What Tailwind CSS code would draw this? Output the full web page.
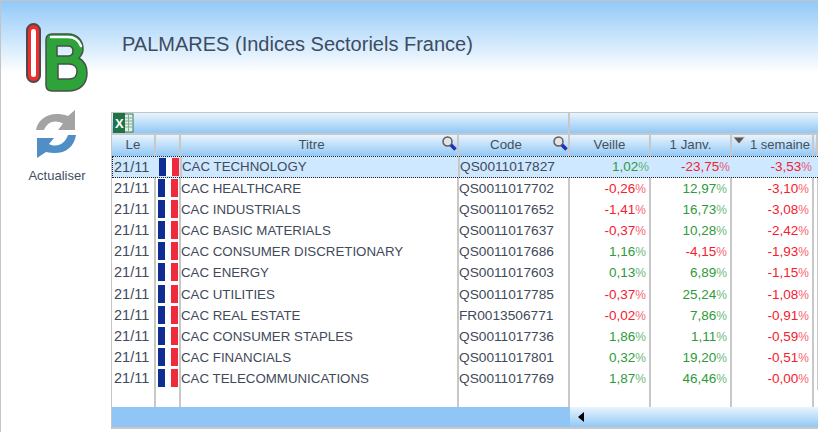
<!DOCTYPE html>
<html lang="en">

<head>
    <meta charset="utf-8">
    <title>Palmares</title>
    <script src="https://cdn.jsdelivr.net/npm/@tailwindcss/browser@4"></script>
</head>

<body class="w-[818px] h-[432px] overflow-hidden bg-white font-['Liberation_Sans',sans-serif] text-[13.300px] text-[#3f4a5a]">
    <div class="flex w-[818px] h-[432px] border-l border-t border-[#c4c4c4] bg-[linear-gradient(#92c9f8,#ffffff_72px)]">
        <!-- Left column: logo + refresh -->
        <div class="w-[110px] shrink-0 flex flex-col">
            <svg class="ml-[24px] mt-[21px]" width="66" height="72" viewBox="25 22 66 72">
                <rect x="27" y="24" width="13" height="58" rx="6.500" fill="#ee2e2e" stroke="#4a4a4a" stroke-width="2"/>
                <rect x="31" y="29" width="5" height="48" rx="2.500" fill="#ffffff"/>
                <path fill-rule="evenodd" fill="#2ea33a" stroke="#46524a" stroke-width="1.500" d="M52 34H68C78 34 83 41 83 49C83 53 81 56 79 58C84 61 87 66 87 73C87 84 80 91 68 91H52C48 91 46 89 46 85V40C46 36 48 34 52 34ZM57 46V56H68C71 56 73 54 73 51C73 48 71 46 68 46ZM58 64V79H69C74 79 77 76 77 71.500C77 67 74 64 69 64Z"/>
                <path d="M51 37H68C75 37 79 41 81 46" fill="none" stroke="#ffffff" stroke-width="2.500" stroke-linecap="round"/>
            </svg>
            <svg class="ml-[33px] mt-[15px]" width="44" height="50" viewBox="34 109 44 50">
                <path fill="#a3a3a3" d="M36 130C38 119 50 110 68 116L75 110V130H58L63 123.500C55 119 47 122 44 130Z"/>
                <path fill="#4f8fc6" d="M76 135C74 149 62 156 46 152L37 158V138H54L49 144C57 148 65 144 68 135Z"/>
            </svg>
            <div class="mt-[9px] pl-[2px] text-center text-[13px] leading-[16px] text-[#44505e]">Actualiser</div>
        </div>

        <!-- Right column: title + table -->
        <div class="flex-1 flex flex-col min-w-0">
            <div class="h-[111px] pl-[11px] pt-[30px] text-[20px] leading-[26px] text-[#3d4c63]">PALMARES (Indices Sectoriels France)</div>

            <div class="flex-1 flex flex-col mb-[3px] border-l border-t border-[#c4c4c4]">
                <!-- Toolbar -->
                <div class="h-[22px] flex shrink-0 border-b-2 border-[#c8c8c8]">
                    <div class="w-[458px] bg-[linear-gradient(#e8f4fe,#92c8f6)] border-r-2 border-[#c8c8c8]">
                        <svg width="22" height="20" viewBox="0 0 22 20">
                            <rect x="10" y="1" width="11" height="18" fill="#e4efe8" stroke="#2f7d55"/>
                            <path d="M13 5H20M13 8H20M13 11H20M13 14H20M16.500 2V18" stroke="#7fae95"/>
                            <rect x="1" y="0" width="12" height="20" fill="#1f7346"/>
                            <text x="3" y="15" font-size="13" font-weight="700" fill="#ffffff">X</text>
                        </svg>
                    </div>
                    <div class="flex-1 bg-[linear-gradient(#e8f4fe,#92c8f6)]"></div>
                </div>

                <!-- Column headers -->
                <div class="h-[21px] shrink-0 grid grid-cols-[44px_25px_278px_111px_81px_81px_82px_1fr] text-center leading-[19px] text-[#44505e] [&>div]:bg-[linear-gradient(#e8f4fe,#92c8f6)] [&>div]:border-r-2 [&>div]:border-[#c8c8c8]">
                    <div>Le</div>
                    <div></div>
                    <div class="relative pr-[15px]">Titre
                        <svg class="absolute right-0 top-[1px]" width="15" height="15" viewBox="0 0 15 15"><path d="M8 8L13.500 13.500" stroke="#1f2fc0" stroke-width="3.500"/><circle cx="5.500" cy="5.500" r="4.500" fill="#e4e4e4" stroke="#5e5e5e" stroke-width="1.500"/></svg>
                    </div>
                    <div class="relative pr-[15px]">Code
                        <svg class="absolute right-0 top-[1px]" width="15" height="15" viewBox="0 0 15 15"><path d="M8 8L13.500 13.500" stroke="#1f2fc0" stroke-width="3.500"/><circle cx="5.500" cy="5.500" r="4.500" fill="#e4e4e4" stroke="#5e5e5e" stroke-width="1.500"/></svg>
                    </div>
                    <div>Veille</div>
                    <div>1 Janv.</div>
                    <div class="relative pl-[16px] text-[13px] whitespace-nowrap">
                        <svg class="absolute left-0 top-[1px]" width="14" height="9" viewBox="0 0 14 9"><path d="M1 1H13L7 8Z" fill="#555555" stroke="#dddddd"/></svg>1 semaine
                    </div>
                    <div></div>
                </div>

                <!-- Rows -->
                <div class="flex-1 flex flex-col min-h-0 [&>div]:grid [&>div]:grid-cols-[44px_25px_278px_111px_81px_81px_82px_1fr] [&>div>div]:border-r-2 [&>div>div]:border-[#c8c8c8] [&>div>div:nth-child(1)]:text-[14.500px] [&>div>div:nth-child(4)]:text-[13.700px] [&>div>div:nth-child(n+5)]:text-[13.500px] [&>div>div:nth-child(n+5)]:text-right [&>div>div:nth-child(n+5)]:pr-[3px]">
                    <div class="h-[21.600px] shrink-0 leading-[20px] bg-[#cde8ff] border-y border-l border-dotted border-[#222222]">
                        <div class="pl-[1px] !border-r-0">21/11</div>
                        <div class="flex pl-[2px] pt-[1px]"><span class="w-[7px] h-[18px] bg-[#0f2d92]"></span><span class="w-[6px] h-[18px] bg-white"></span><span class="w-[7px] h-[18px] bg-[#ef2a3c]"></span></div>
                        <div>CAC TECHNOLOGY</div>
                        <div class="!border-r-0">QS0011017827</div>
                        <div class="text-[#2f9a3c] !border-r-0">1,02<span class="text-[12px] opacity-70">%</span></div>
                        <div class="text-[#f5202f] !border-r-0">-23,75<span class="text-[12px] opacity-70">%</span></div>
                        <div class="text-[#f5202f] !border-r-0">-3,53<span class="text-[12px] opacity-70">%</span></div>
                        <div class="!border-r-0"></div>
                    </div>
                    <div class="h-[21.200px] shrink-0 leading-[21px]">
                        <div class="pl-[2px]">21/11</div>
                        <div class="flex pl-[2px] pt-[1px]"><span class="w-[7px] h-[18px] bg-[#0f2d92]"></span><span class="w-[6px] h-[18px] bg-white"></span><span class="w-[7px] h-[18px] bg-[#ef2a3c]"></span></div>
                        <div>CAC HEALTHCARE</div>
                        <div>QS0011017702</div>
                        <div class="text-[#f5202f]">-0,26<span class="text-[12px] opacity-70">%</span></div>
                        <div class="text-[#2f9a3c]">12,97<span class="text-[12px] opacity-70">%</span></div>
                        <div class="text-[#f5202f]">-3,10<span class="text-[12px] opacity-70">%</span></div>
                        <div></div>
                    </div>
                    <div class="h-[21.200px] shrink-0 leading-[21px]">
                        <div class="pl-[2px]">21/11</div>
                        <div class="flex pl-[2px] pt-[1px]"><span class="w-[7px] h-[18px] bg-[#0f2d92]"></span><span class="w-[6px] h-[18px] bg-white"></span><span class="w-[7px] h-[18px] bg-[#ef2a3c]"></span></div>
                        <div>CAC INDUSTRIALS</div>
                        <div>QS0011017652</div>
                        <div class="text-[#f5202f]">-1,41<span class="text-[12px] opacity-70">%</span></div>
                        <div class="text-[#2f9a3c]">16,73<span class="text-[12px] opacity-70">%</span></div>
                        <div class="text-[#f5202f]">-3,08<span class="text-[12px] opacity-70">%</span></div>
                        <div></div>
                    </div>
                    <div class="h-[21.200px] shrink-0 leading-[21px]">
                        <div class="pl-[2px]">21/11</div>
                        <div class="flex pl-[2px] pt-[1px]"><span class="w-[7px] h-[18px] bg-[#0f2d92]"></span><span class="w-[6px] h-[18px] bg-white"></span><span class="w-[7px] h-[18px] bg-[#ef2a3c]"></span></div>
                        <div>CAC BASIC MATERIALS</div>
                        <div>QS0011017637</div>
                        <div class="text-[#f5202f]">-0,37<span class="text-[12px] opacity-70">%</span></div>
                        <div class="text-[#2f9a3c]">10,28<span class="text-[12px] opacity-70">%</span></div>
                        <div class="text-[#f5202f]">-2,42<span class="text-[12px] opacity-70">%</span></div>
                        <div></div>
                    </div>
                    <div class="h-[21.200px] shrink-0 leading-[21px]">
                        <div class="pl-[2px]">21/11</div>
                        <div class="flex pl-[2px] pt-[1px]"><span class="w-[7px] h-[18px] bg-[#0f2d92]"></span><span class="w-[6px] h-[18px] bg-white"></span><span class="w-[7px] h-[18px] bg-[#ef2a3c]"></span></div>
                        <div>CAC CONSUMER DISCRETIONARY</div>
                        <div>QS0011017686</div>
                        <div class="text-[#2f9a3c]">1,16<span class="text-[12px] opacity-70">%</span></div>
                        <div class="text-[#f5202f]">-4,15<span class="text-[12px] opacity-70">%</span></div>
                        <div class="text-[#f5202f]">-1,93<span class="text-[12px] opacity-70">%</span></div>
                        <div></div>
                    </div>
                    <div class="h-[21.200px] shrink-0 leading-[21px]">
                        <div class="pl-[2px]">21/11</div>
                        <div class="flex pl-[2px] pt-[1px]"><span class="w-[7px] h-[18px] bg-[#0f2d92]"></span><span class="w-[6px] h-[18px] bg-white"></span><span class="w-[7px] h-[18px] bg-[#ef2a3c]"></span></div>
                        <div>CAC ENERGY</div>
                        <div>QS0011017603</div>
                        <div class="text-[#2f9a3c]">0,13<span class="text-[12px] opacity-70">%</span></div>
                        <div class="text-[#2f9a3c]">6,89<span class="text-[12px] opacity-70">%</span></div>
                        <div class="text-[#f5202f]">-1,15<span class="text-[12px] opacity-70">%</span></div>
                        <div></div>
                    </div>
                    <div class="h-[21.200px] shrink-0 leading-[21px]">
                        <div class="pl-[2px]">21/11</div>
                        <div class="flex pl-[2px] pt-[1px]"><span class="w-[7px] h-[18px] bg-[#0f2d92]"></span><span class="w-[6px] h-[18px] bg-white"></span><span class="w-[7px] h-[18px] bg-[#ef2a3c]"></span></div>
                        <div>CAC UTILITIES</div>
                        <div>QS0011017785</div>
                        <div class="text-[#f5202f]">-0,37<span class="text-[12px] opacity-70">%</span></div>
                        <div class="text-[#2f9a3c]">25,24<span class="text-[12px] opacity-70">%</span></div>
                        <div class="text-[#f5202f]">-1,08<span class="text-[12px] opacity-70">%</span></div>
                        <div></div>
                    </div>
                    <div class="h-[21.200px] shrink-0 leading-[21px]">
                        <div class="pl-[2px]">21/11</div>
                        <div class="flex pl-[2px] pt-[1px]"><span class="w-[7px] h-[18px] bg-[#0f2d92]"></span><span class="w-[6px] h-[18px] bg-white"></span><span class="w-[7px] h-[18px] bg-[#ef2a3c]"></span></div>
                        <div>CAC REAL ESTATE</div>
                        <div>FR0013506771</div>
                        <div class="text-[#f5202f]">-0,02<span class="text-[12px] opacity-70">%</span></div>
                        <div class="text-[#2f9a3c]">7,86<span class="text-[12px] opacity-70">%</span></div>
                        <div class="text-[#f5202f]">-0,91<span class="text-[12px] opacity-70">%</span></div>
                        <div></div>
                    </div>
                    <div class="h-[21.200px] shrink-0 leading-[21px]">
                        <div class="pl-[2px]">21/11</div>
                        <div class="flex pl-[2px] pt-[1px]"><span class="w-[7px] h-[18px] bg-[#0f2d92]"></span><span class="w-[6px] h-[18px] bg-white"></span><span class="w-[7px] h-[18px] bg-[#ef2a3c]"></span></div>
                        <div>CAC CONSUMER STAPLES</div>
                        <div>QS0011017736</div>
                        <div class="text-[#2f9a3c]">1,86<span class="text-[12px] opacity-70">%</span></div>
                        <div class="text-[#2f9a3c]">1,11<span class="text-[12px] opacity-70">%</span></div>
                        <div class="text-[#f5202f]">-0,59<span class="text-[12px] opacity-70">%</span></div>
                        <div></div>
                    </div>
                    <div class="h-[21.200px] shrink-0 leading-[21px]">
                        <div class="pl-[2px]">21/11</div>
                        <div class="flex pl-[2px] pt-[1px]"><span class="w-[7px] h-[18px] bg-[#0f2d92]"></span><span class="w-[6px] h-[18px] bg-white"></span><span class="w-[7px] h-[18px] bg-[#ef2a3c]"></span></div>
                        <div>CAC FINANCIALS</div>
                        <div>QS0011017801</div>
                        <div class="text-[#2f9a3c]">0,32<span class="text-[12px] opacity-70">%</span></div>
                        <div class="text-[#2f9a3c]">19,20<span class="text-[12px] opacity-70">%</span></div>
                        <div class="text-[#f5202f]">-0,51<span class="text-[12px] opacity-70">%</span></div>
                        <div></div>
                    </div>
                    <div class="h-[21.200px] shrink-0 leading-[21px]">
                        <div class="pl-[2px]">21/11</div>
                        <div class="flex pl-[2px] pt-[1px]"><span class="w-[7px] h-[18px] bg-[#0f2d92]"></span><span class="w-[6px] h-[18px] bg-white"></span><span class="w-[7px] h-[18px] bg-[#ef2a3c]"></span></div>
                        <div>CAC TELECOMMUNICATIONS</div>
                        <div>QS0011017769</div>
                        <div class="text-[#2f9a3c]">1,87<span class="text-[12px] opacity-70">%</span></div>
                        <div class="text-[#2f9a3c]">46,46<span class="text-[12px] opacity-70">%</span></div>
                        <div class="text-[#f5202f]">-0,00<span class="text-[12px] opacity-70">%</span></div>
                        <div></div>
                    </div>
                    <!-- Empty space under the last row, column lines carry on -->
                    <div class="flex-1">
                        <div></div><div></div><div></div><div></div><div></div><div></div><div></div><div class="!border-r-0"></div>
                    </div>
                </div>

                <!-- Bottom bar with horizontal scroll -->
                <div class="h-[22px] shrink-0 flex border-b-2 border-[#c8c8c8]">
                    <div class="w-[458px] bg-[#90c6f5]"></div>
                    <div class="flex-1 flex items-center pl-[8px] bg-[linear-gradient(#e8f4fe,#92c8f6)]">
                        <span class="w-0 h-0 border-y-[5px] border-y-transparent border-r-[6px] border-r-black"></span>
                    </div>
                </div>
            </div>
        </div>
    </div>
</body>

</html>
